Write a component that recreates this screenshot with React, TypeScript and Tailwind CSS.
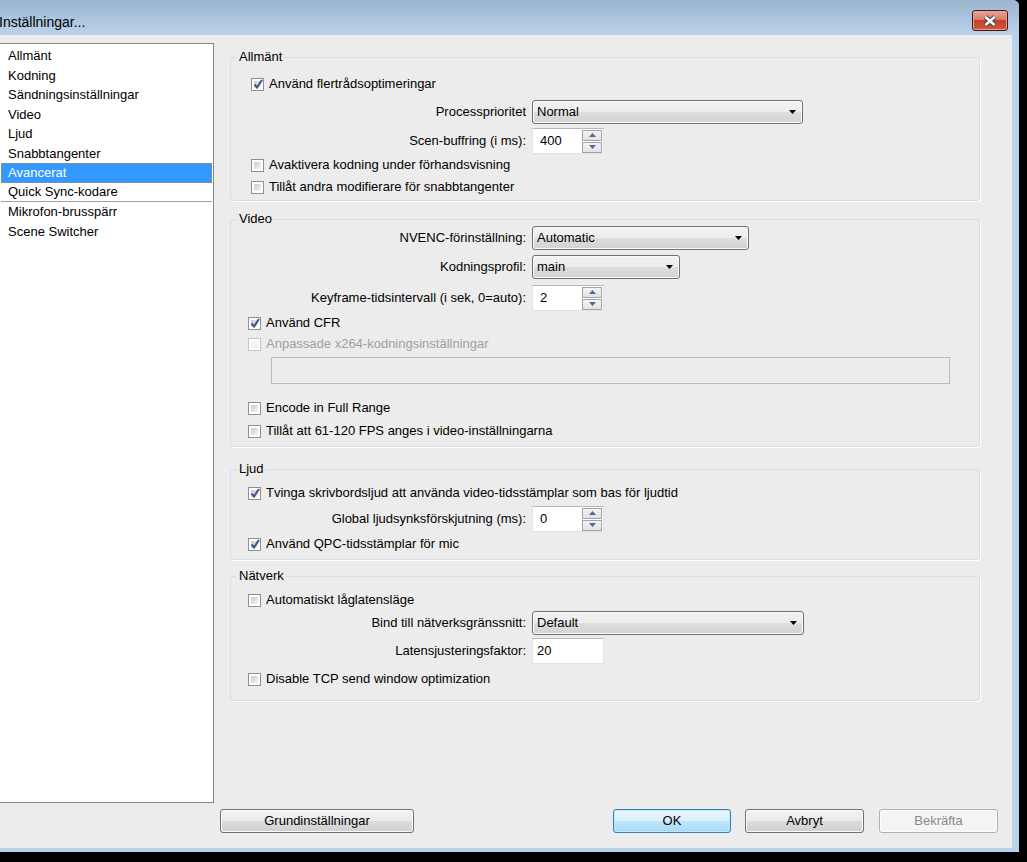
import type { ReactNode } from 'react';

const listItems = [
  'Allmänt',
  'Kodning',
  'Sändningsinställningar',
  'Video',
  'Ljud',
  'Snabbtangenter',
  'Avancerat',
  'Quick Sync-kodare',
  'Mikrofon-brusspärr',
  'Scene Switcher',
];

function CheckBox({ checked = false, disabled = false }: { checked?: boolean; disabled?: boolean }) {
  return (
    <span
      className={`relative w-[13px] h-[13px] shrink-0 border bg-white p-[2px] flex ${
        disabled ? 'border-[#c5c5c5]' : 'border-[#8e8f8f]'
      }`}
    >
      <span
        className={`flex-1 ${
          disabled
            ? 'bg-[#f4f4f4]'
            : 'bg-gradient-to-br from-[#cbcbcb] to-[#f6f6f6]'
        }`}
      />
      {checked && (
        <svg className="absolute -left-[1px] -top-[2px] w-[14px] h-[14px]" viewBox="0 0 14 14">
          <path d="M3.5 7.5 L6 10.5 L11 3" fill="none" stroke="#42588a" strokeWidth={2.2} />
        </svg>
      )}
    </span>
  );
}

function CheckRow({
  label,
  checked,
  disabled,
  className,
}: {
  label: string;
  checked?: boolean;
  disabled?: boolean;
  className: string;
}) {
  return (
    <div className={`flex items-center h-[20px] ${className}`}>
      <CheckBox checked={checked} disabled={disabled} />
      <span className={`ml-[5px] whitespace-nowrap ${disabled ? 'text-[#a0a0a0]' : ''}`}>{label}</span>
    </div>
  );
}

function LabelRow({ label, className, children }: { label: string; className: string; children: ReactNode }) {
  return (
    <div className={`flex items-center ${className}`}>
      <span className="w-[295px] shrink-0 text-right whitespace-nowrap">{label}</span>
      {children}
    </div>
  );
}

function Arrow() {
  return (
    <svg className="w-[7px] h-[4px] shrink-0" viewBox="0 0 7 4">
      <path d="M0 0h7l-3.5 4z" fill="#000" />
    </svg>
  );
}

function Combo({ value, className }: { value: string; className: string }) {
  return (
    <div
      className={`ml-[6px] h-[24px] rounded-[3px] border border-[#707070] bg-[linear-gradient(#f3f3f3,#ececec_50%,#dedede_50%,#d2d2d2)] shadow-[inset_0_0_0_1px_#fbfbfb] flex items-center pl-[4px] pr-[6px] ${className}`}
    >
      <span className="flex-1">{value}</span>
      <Arrow />
    </div>
  );
}

function SpinButton({ up }: { up?: boolean }) {
  return (
    <span className="h-[11px] w-[20px] border border-[#a3a3a3] bg-gradient-to-b from-[#f4f4f4] to-[#e2e2e2] flex items-center justify-center">
      <svg className="w-[7px] h-[4px]" viewBox="0 0 7 4">
        <path d={up ? 'M0 4h7L3.5 0z' : 'M0 0h7L3.5 4z'} fill="#4b6a9b" />
      </svg>
    </span>
  );
}

function Spin({ value }: { value: string }) {
  return (
    <div className="ml-[6px] w-[72px] h-[26px] bg-white border border-[#dfe3e8] border-t-[#b5b8be] flex items-center pl-[7px] pr-[1px]">
      <span className="flex-1">{value}</span>
      <div className="flex flex-col gap-[1px]">
        <SpinButton up />
        <SpinButton />
      </div>
    </div>
  );
}

function Group({ title, className, children }: { title: string; className: string; children: ReactNode }) {
  return (
    <fieldset
      className={`w-[750px] border border-[#d5dfe5] rounded-[3px] shadow-[1px_1px_0_#ffffff] flex flex-col ${className}`}
    >
      <legend className="ml-[6px] px-[2px] leading-[14px]">{title}</legend>
      {children}
    </fieldset>
  );
}

function Button({
  children,
  variant = 'normal',
  className,
}: {
  children: ReactNode;
  variant?: 'normal' | 'default' | 'disabled';
  className: string;
}) {
  const look =
    variant === 'default'
      ? 'border-[#3c7fb1] bg-[linear-gradient(#eaf6fd,#d9f0fc_50%,#bee6fd_50%,#a7d9f5)] shadow-[inset_0_0_0_1px_#bfe9fb]'
      : variant === 'disabled'
        ? 'border-[#adb2b5] bg-[#f4f4f4] text-[#8a8a8a] shadow-[inset_0_0_0_1px_#fcfcfc]'
        : 'border-[#707070] bg-[linear-gradient(#f2f2f2,#ebebeb_50%,#dddddd_50%,#cfcfcf)] shadow-[inset_0_0_0_1px_#fcfcfc]';
  return (
    <div className={`h-[24px] rounded-[3px] border flex items-center justify-center ${look} ${className}`}>
      {children}
    </div>
  );
}

export default function App() {
  return (
    <div className="w-[1027px] h-[862px] bg-black overflow-hidden font-['Liberation_Sans',Arial,sans-serif] text-[13px] text-black">
      <div className="w-[1019px] h-[852px] bg-[#b9d1ea] rounded-tr-[6px] flex flex-col">
        {/* Title bar */}
        <div className="h-[35px] shrink-0 flex items-start rounded-tr-[6px] bg-gradient-to-b from-[#9bb5d0] to-[#bbd3ea]">
          <span className="mt-[14px] text-[14px] leading-[16px] -ml-[1px]">Inställningar...</span>
          <div className="ml-auto mr-[11px] mt-[10px] w-[36px] h-[21px] rounded-[3px] border border-[#4a1519] bg-[linear-gradient(#eaa89b,#d97a66_45%,#c4412b_50%,#cf5a42)] shadow-[inset_0_0_0_1px_#e8a090] flex items-center justify-center">
            <svg className="w-[16px] h-[12px]" viewBox="0 0 16 12">
              <path d="M3.5 2 L12.5 10 M12.5 2 L3.5 10" stroke="#3a3a3a" strokeWidth={4.6} />
              <path d="M3.5 2 L12.5 10 M12.5 2 L3.5 10" stroke="#ffffff" strokeWidth={2.6} />
            </svg>
          </div>
        </div>

        {/* Client area */}
        <div className="w-[1012px] h-[813px] bg-[#ececec] flex flex-col">
          <div className="flex pt-[8px]">
            {/* Category list */}
            <div className="w-[214px] h-[760px] shrink-0 bg-white border-y border-r border-[#828790] pt-[2px] pl-[1px] pr-[1px]">
              {listItems.map((item) => {
                const selected = item === 'Avancerat';
                const separated = item === 'Quick Sync-kodare';
                return (
                  <div
                    key={item}
                    className={`h-[19.5px] flex items-center leading-none ${
                      selected
                        ? 'bg-[#3399ff] text-white border border-dotted border-[#c2834a] pl-[6px]'
                        : 'pl-[7px]'
                    } ${separated ? 'border-b border-[#a0a0a0]' : ''}`}
                  >
                    {item}
                  </div>
                );
              })}
            </div>

            {/* Settings */}
            <div className="ml-[16px] pt-[7px] flex flex-col">
              <Group title="Allmänt" className="h-[151px]">
                <CheckRow className="mt-[10px] pl-[20px]" label="Använd flertrådsoptimeringar" checked />
                <LabelRow className="mt-[6px] h-[24px]" label="Processprioritet">
                  <Combo value="Normal" className="w-[271px]" />
                </LabelRow>
                <LabelRow className="mt-[4px] h-[26px]" label="Scen-buffring (i ms):">
                  <Spin value="400" />
                </LabelRow>
                <CheckRow className="mt-[1px] pl-[20px]" label="Avaktivera kodning under förhandsvisning" />
                <CheckRow className="mt-[2px] pl-[20px]" label="Tillåt andra modifierare för snabbtangenter" />
              </Group>

              <Group title="Video" className="mt-[11px] h-[235px]">
                <LabelRow className="mt-[0px] h-[24px]" label="NVENC-förinställning:">
                  <Combo value="Automatic" className="w-[217px]" />
                </LabelRow>
                <LabelRow className="mt-[5px] h-[24px]" label="Kodningsprofil:">
                  <Combo value="main" className="w-[148px]" />
                </LabelRow>
                <LabelRow className="mt-[6px] h-[26px]" label="Keyframe-tidsintervall (i sek, 0=auto):">
                  <Spin value="2" />
                </LabelRow>
                <CheckRow className="mt-[2px] pl-[17px]" label="Använd CFR" checked />
                <CheckRow className="mt-[1px] pl-[17px]" label="Anpassade x264-kodningsinställningar" disabled />
                <div className="mt-[3px] ml-[40px] w-[679px] h-[27px] border border-[#b8bcc0] bg-[#ededed]" />
                <CheckRow className="mt-[14px] pl-[17px]" label="Encode in Full Range" />
                <CheckRow className="mt-[3px] pl-[17px]" label="Tillåt att 61-120 FPS anges i video-inställningarna" />
              </Group>

              <Group title="Ljud" className="mt-[15px] h-[98px]">
                <CheckRow
                  className="mt-[7px] pl-[17px]"
                  label="Tvinga skrivbordsljud att använda video-tidsstämplar som bas för ljudtid"
                  checked
                />
                <LabelRow className="mt-[3px] h-[26px]" label="Global ljudsynksförskjutning (ms):">
                  <Spin value="0" />
                </LabelRow>
                <CheckRow className="mt-[2px] pl-[17px]" label="Använd QPC-tidsstämplar för mic" checked />
              </Group>

              <Group title="Nätverk" className="mt-[9px] h-[132px]">
                <CheckRow className="mt-[7px] pl-[17px]" label="Automatiskt låglatensläge" />
                <LabelRow className="mt-[1px] h-[24px]" label="Bind till nätverksgränssnitt:">
                  <Combo value="Default" className="w-[272px]" />
                </LabelRow>
                <LabelRow className="mt-[3px] h-[26px]" label="Latensjusteringsfaktor:">
                  <div className="ml-[6px] w-[72px] h-[26px] bg-white border border-[#dfe3e8] border-t-[#b5b8be] flex items-center pl-[4px]">
                    20
                  </div>
                </LabelRow>
                <CheckRow className="mt-[5px] pl-[17px]" label="Disable TCP send window optimization" />
              </Group>
            </div>
          </div>

          {/* Dialog buttons */}
          <div className="mt-[6px] flex pr-[14px]">
            <Button className="ml-[220px] w-[194px]">Grundinställningar</Button>
            <Button variant="default" className="ml-auto w-[118px]">
              OK
            </Button>
            <Button className="ml-[14px] w-[119px]">Avbryt</Button>
            <Button variant="disabled" className="ml-[15px] w-[119px]">
              Bekräfta
            </Button>
          </div>
        </div>
      </div>
    </div>
  );
}
